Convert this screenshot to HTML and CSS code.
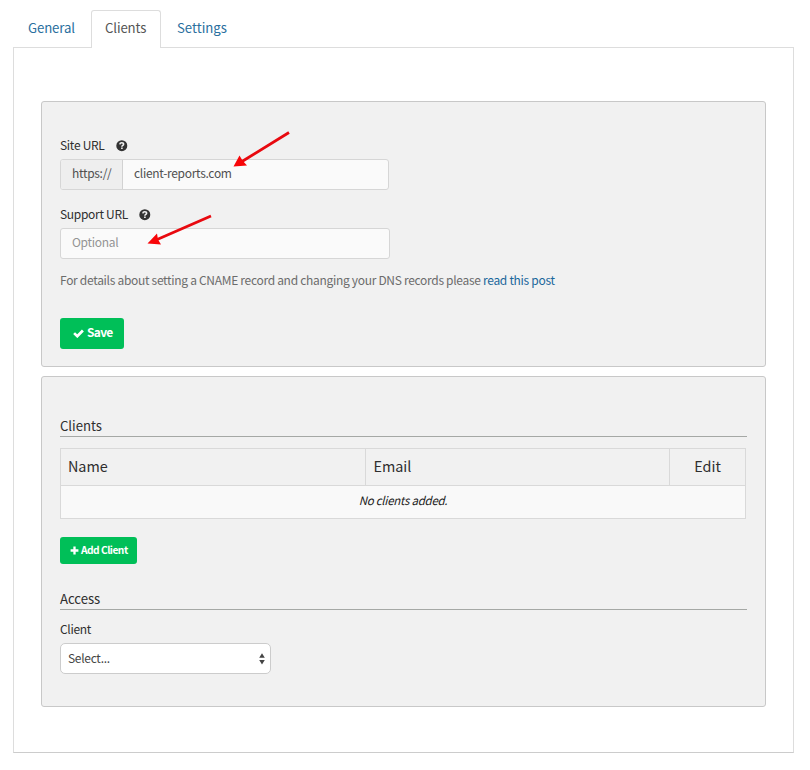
FILE: index.html
```html
<!DOCTYPE html>
<html lang="en">
<head>
<meta charset="utf-8">
<title>Clients</title>
<link rel="stylesheet" href="styles.css">
</head>
<body>
<nav class="tabs">
  <a class="tab tab-general">General</a>
  <a class="tab active">Clients</a>
  <a class="tab tab-settings">Settings</a>
</nav>
<main class="panel">
  <section class="card card-site">
    <div class="label"><span>Site URL</span>
      <svg class="help" viewBox="0 0 12 12"><circle cx="5.800" cy="5.700" r="5.500" fill="#333"/><path d="M3.800 4.400Q4 2.700 5.800 2.700Q7.600 2.700 7.600 4.200C7.600 5.400 5.900 5.300 5.900 6.700" fill="none" stroke="#f1f1f1" stroke-width="1.600"/><path d="M5.100 7.500h1.600v1.500H5.100z" fill="#f1f1f1"/></svg>
    </div>
    <div class="field group"><span class="addon">https://</span><span class="value">client-reports.com</span></div>
    <div class="label label-support"><span>Support URL</span>
      <svg class="help" viewBox="0 0 12 12"><circle cx="5.800" cy="5.700" r="5.500" fill="#333"/><path d="M3.800 4.400Q4 2.700 5.800 2.700Q7.600 2.700 7.600 4.200C7.600 5.400 5.900 5.300 5.900 6.700" fill="none" stroke="#f1f1f1" stroke-width="1.600"/><path d="M5.100 7.500h1.600v1.500H5.100z" fill="#f1f1f1"/></svg>
    </div>
    <div class="field support"><span class="placeholder">Optional</span></div>
    <p class="hint">For details about setting a CNAME record and changing your DNS records please <a>read this post</a></p>
    <button class="btn save"><svg class="check" viewBox="0 0 11 9"><path d="M1.1 4.1L4.3 7.2L9.9 1.5" fill="none" stroke="#fff" stroke-width="2.7"/></svg><span>Save</span></button>
  </section>
  <section class="card card-clients">
    <h2>Clients</h2>
    <div class="table">
      <div class="row head"><span class="cell">Name</span><span class="cell">Email</span><span class="cell edit">Edit</span></div>
      <div class="row empty">No clients added.</div>
    </div>
    <button class="btn add"><svg class="plus" viewBox="0 0 9 9"><path d="M4.5 .6v7.8M.6 4.5h7.8" stroke="#fff" stroke-width="2.3"/></svg><span>Add Client</span></button>
    <h2 class="access">Access</h2>
    <div class="label label-client"><span>Client</span></div>
    <div class="select"><span>Select...</span><svg class="arrows" viewBox="0 0 6 12"><path d="M3 .2L5.8 4.7H.2zM3 11.4L5.8 6.9H.2z" fill="#444"/></svg></div>
  </section>
</main>
<svg class="annotation" viewBox="0 0 810 770"><g stroke="#e8090f" stroke-width="2.8"><path d="M289 132.5L242 161.5M211 216L156 240"/></g><path d="M233.5 166.5L239.500 155.500L242.500 160.500L247 165.500ZM147.500 243.500L157 233.500L158 239.500L161 244.500Z" fill="#f80508"/></svg>
</body>
</html>
```
FILE: styles.css
```css
* { box-sizing: border-box; }
body {
  margin: 0;
  padding: 10px 16px 0 13px;
  background: #fff;
  color: #2e2e2e;
  font-family: "Noto Sans CJK SC", "Open Sans", sans-serif;
  font-size: 12px;
  letter-spacing: -0.3px;
  line-height: 20px;
}
.tabs { display: flex; height: 37px; font-size: 13.2px; letter-spacing: -0.12px; }
.tab { height: 38px; line-height: 36px; color: #2a6f9e; }
.tab-general { width: 78px; padding-left: 15px; }
.tab.active {
  position: relative;
  width: 70px;
  padding-left: 13px;
  line-height: 34px;
  color: #555;
  background: #fff;
  border: 1px solid #ddd;
  border-bottom: 0;
  border-radius: 3px 3px 0 0;
}
.tab-settings { padding-left: 16px; letter-spacing: 0; }
.panel {
  height: 706px;
  padding: 53px 27px 0;
  border: 1px solid #ddd;
  border-bottom-color: #ccc;
}
.card {
  width: 725px;
  padding: 34px 18px 0;
  background: #f1f1f1;
  border: 1px solid #c8c8c8;
  border-radius: 3px;
}
.card-site { height: 266px; }
.card-clients { height: 331px; margin-top: 9px; padding-top: 38px; }
.label { display: flex; align-items: center; gap: 11px; height: 20px; }
.label span { margin-top: -2px; }
.help { width: 12px; height: 12px; }
.field {
  display: flex;
  height: 31px;
  line-height: 26px;
  background: #fafafa;
  border: 1px solid #d6d6d6;
  border-radius: 3px;
}
.group { width: 329px; margin-top: 3px; color: #505050; }
.addon {
  width: 62px;
  padding-left: 11px;
  background: #eee;
  border-right: 1px solid #d2d2d2;
  border-radius: 2px 0 0 2px;
}
.value { padding-left: 11px; }
.label-support { margin-top: 15px; }
.support { width: 330px; margin-top: 3px; }
.placeholder { padding-left: 11px; color: #949494; }
.hint { height: 20px; margin: 12px 0 0; line-height: 18px; color: #6c6c6c; white-space: nowrap; }
.hint a { color: #1a679b; }
.btn {
  display: flex;
  align-items: center;
  padding: 0;
  border: 0;
  border-radius: 3px;
  background: #00bf58;
  color: #fff;
  font-family: inherit;
  font-weight: 700;
}
.btn span { margin-top: -2px; }
.save { width: 64px; height: 31px; margin-top: 27px; padding-left: 13px; gap: 3px; font-size: 12px; letter-spacing: -0.7px; line-height: 29px; }
.save span { margin-top: -4px; }
.check { width: 11px; height: 9px; }
h2 {
  height: 22px;
  margin: 0;
  font-size: 13.2px;
  font-weight: 400;
  letter-spacing: -0.05px;
  line-height: 22px;
  border-bottom: 1px solid #a5a8a5;
}
.table { width: 686px; margin-top: 11px; border: 1px solid #d9d9d9; }
.row { display: flex; }
.head { height: 37px; font-size: 14.4px; letter-spacing: -0.05px; line-height: 34px; border-bottom: 1px solid #d9d9d9; }
.cell { height: 36px; width: 305px; padding-left: 8px; border-right: 1px solid #d9d9d9; }
.cell:first-child { padding-left: 7px; }
.cell.edit { width: 75px; padding: 0; border: 0; text-align: center; }
.empty { justify-content: center; height: 32px; line-height: 28px; background: #f9f9f9; color: #222; font-style: italic; font-size: 11.5px; letter-spacing: -0.27px; }
.add { width: 77px; height: 27px; margin-top: 18px; padding-left: 10px; gap: 2px; font-size: 10.2px; letter-spacing: -0.5px; line-height: 25px; }
.plus { width: 9px; height: 9px; }
h2.access { margin-top: 24px; }
.label-client { margin-top: 10px; }
.select {
  display: flex;
  align-items: center;
  justify-content: space-between;
  width: 211px;
  height: 31px;
  margin-top: 3px;
  padding: 0 5px 0 7px;
  line-height: 29px;
  color: #444;
  background: #fff;
  border: 1px solid #ccc;
  border-radius: 5px;
}
.select span { margin-top: -3px; }
.arrows { width: 6px; height: 12px; }
.annotation { position: absolute; top: 0; left: 0; width: 810px; height: 770px; pointer-events: none; }
```
